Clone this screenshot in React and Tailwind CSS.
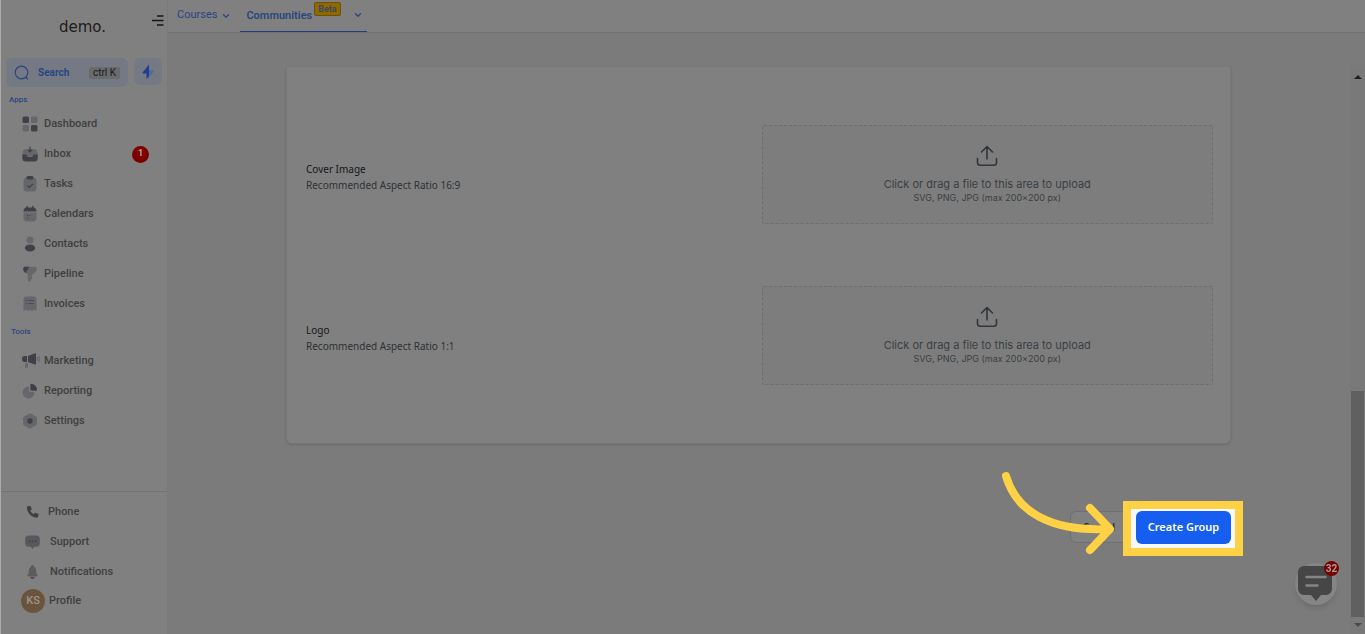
import { ChevronDown } from "lucide-react";

const apps = [
  { label: "Dashboard", icon: DashboardIcon },
  { label: "Inbox", icon: InboxIcon, count: 1 },
  { label: "Tasks", icon: TasksIcon },
  { label: "Calendars", icon: CalendarIcon },
  { label: "Contacts", icon: ContactsIcon },
  { label: "Pipeline", icon: PipelineIcon },
  { label: "Invoices", icon: InvoicesIcon },
];

const tools = [
  { label: "Marketing", icon: MarketingIcon },
  { label: "Reporting", icon: ReportingIcon },
  { label: "Settings", icon: SettingsIcon },
];

function Icon({ children }) {
  return (
    <svg viewBox="0 0 16 16" className="h-4 w-4 shrink-0" aria-hidden="true">
      {children}
    </svg>
  );
}

function DashboardIcon() {
  return (
    <Icon>
      <rect x="0.5" y="0.5" width="6.5" height="6.5" rx="1.5" fill="#3f4048" />
      <rect x="9" y="0.5" width="6.5" height="6.5" rx="1.5" fill="#66676b" />
      <rect x="0.5" y="9" width="6.5" height="6.5" rx="1.5" fill="#66676b" />
      <rect x="9" y="9" width="6.5" height="6.5" rx="1.5" fill="#3f4048" />
    </Icon>
  );
}

function InboxIcon() {
  return (
    <Icon>
      <path d="M4 3h8c2 0 3 1 3.3 3l.4 4H.3l.4-4C1 4 2 3 4 3z" fill="#66676b" />
      <path
        d="M.3 8.5h3.5c1 0 1.2 1.8 2.2 2.2h4c1-.4 1.2-2.2 2.2-2.2h3.5V12c0 2.4-1.3 3.5-3.5 3.5H3.8C1.6 15.5.3 14.4.3 12z"
        fill="#3f4048"
      />
      <path d="M8 .5v5.500M6 4l2 2 2-2" fill="none" stroke="#3f4048" strokeWidth="1.2" />
    </Icon>
  );
}

function TasksIcon() {
  return (
    <Icon>
      <rect x="1.5" y="1.5" width="13" height="14" rx="3.5" fill="#66676b" />
      <rect x="4.5" y="0" width="7" height="3.5" rx="1.5" fill="#3f4048" />
      <path d="M5.5 9.500l2 1.800 3.500-3.500" fill="none" stroke="#3f4048" strokeWidth="1.2" />
    </Icon>
  );
}

function CalendarIcon() {
  return (
    <Icon>
      <path d="M1.5 6.500h13V12c0 2.300-1.200 3.500-3.500 3.500H5c-2.300 0-3.500-1.200-3.500-3.500z" fill="#66676b" />
      <path d="M1.5 5.500C1.500 3 2.800 1.500 5 1.500h6c2.200 0 3.500 1.500 3.500 4z" fill="#3f4048" />
      <path d="M5 0v3M11 0v3" stroke="#3f4048" strokeWidth="1.5" />
      <path d="M5 9.500h1M7.500 9.500h1M5 12h1" stroke="#3f4048" strokeWidth="1" />
    </Icon>
  );
}

function ContactsIcon() {
  return (
    <Icon>
      <circle cx="8" cy="4" r="3.6" fill="#66676b" />
      <ellipse cx="8" cy="12" rx="5.2" ry="3.5" fill="#3f4048" />
    </Icon>
  );
}

function PipelineIcon() {
  return (
    <Icon>
      <path
        d="M3 .8h10c1 0 1.600.6 1.600 1.500v1.600c0 .8-.5 1.500-1 2L10.800 8c-.5.500-.7 1-.7 1.600V12c0 .6-.4 1.300-.9 1.600l-1.200 1.600c-1 .6-2.200 0-2.200-1.200V9.600c0-.5-.3-1.200-.6-1.600L2.100 5.700c-.4-.4-.7-1.100-.7-1.600V2.300C1.400 1.400 2.100.8 3 .8z"
        fill="#66676b"
      />
      <path d="M3 .8h4.500L3.400 7 2.100 5.700c-.4-.4-.7-1.100-.7-1.600V2.300C1.400 1.400 2.100.8 3 .8z" fill="#3f4048" />
    </Icon>
  );
}

function InvoicesIcon() {
  return (
    <Icon>
      <path
        d="M1.500 3c0-1.500.8-2.500 2.300-2.500h8.400c1.500 0 2.300 1 2.300 2.500v12l-2.500-1.500-2 1.800-2-1.500-2 1.500-2-1.800-2.500 1.500z"
        fill="#66676b"
      />
      <path d="M4 4.500h1.200M6.500 4.500H12M4 7.500h1.200M6.500 7.500H12" stroke="#4a4b52" strokeWidth="1.2" />
    </Icon>
  );
}

function MarketingIcon() {
  return (
    <svg viewBox="0 0 18 16" className="-mr-0.5 h-4 w-[18px] shrink-0" aria-hidden="true">
      <path d="M0 6c0-2 1-3 2.500-3H5v6H2.500C1 9 0 8 0 6zM6 3l6.500-2.500c1-.4 1.500 0 1.500 1v9c0 1-.5 1.400-1.500 1L6 9z" fill="#3f4048" />
      <path d="M3 10h3v3.500c0 2-3 2-3 0z" fill="#66676b" />
      <path d="M15.200 4v4M17.200 3v6" stroke="#66676b" strokeWidth="1.2" />
    </svg>
  );
}

function ReportingIcon() {
  return (
    <Icon>
      <path d="M7 3.500v3.300C7 8.200 7.800 9 9.200 9h3.300A6 6 0 1 1 7 3.500z" fill="#66676b" />
      <path d="M9 .8c3.500.3 5.800 2.600 6 6 0 .6-.4.900-1 .9h-4c-1 0-1.700-.6-1.700-1.600V1.500c0-.4.300-.7.700-.7z" fill="#3f4048" />
    </Icon>
  );
}

function SettingsIcon() {
  return (
    <Icon>
      <path
        d="M7 .8c.6-.4 1.400-.4 2 0l4.800 2.600c.7.400 1.200 1 1.200 1.800v5.600c0 .8-.5 1.400-1.200 1.800L9 15.200c-.6.400-1.400.4-2 0l-4.800-2.600C1.500 12.200 1 11.600 1 10.800V5.200c0-.8.500-1.400 1.200-1.800z"
        fill="#66676b"
      />
      <circle cx="8" cy="8" r="2.7" fill="#3f4048" />
    </Icon>
  );
}

function NavItem({ label, icon: ItemIcon, count }) {
  return (
    <a href="#" className="flex h-[30px] items-center gap-1.5 pr-[18px] pl-[21px]">
      <ItemIcon />
      <span className="flex-1">{label}</span>
      {count && (
        <span className="flex h-[17px] w-[17px] items-center justify-center rounded-full bg-[#7c0000] text-[9px] font-bold text-[#b9a0a0]">
          {count}
        </span>
      )}
    </a>
  );
}

function Sidebar() {
  return (
    <aside className="flex w-[168px] shrink-0 flex-col border-r border-l border-r-[#7a7a7a] border-l-[#ababab] bg-[#808080] text-[11px] font-medium text-[#3f3f40]">
      <div className="flex h-[58px] items-start justify-end">
        <div className="flex-1 pt-[18px] pl-[58px] font-['DejaVu_Sans'] text-[15px] leading-[18px] font-normal text-[#1c1c1c]">
          demo.
        </div>
        <button aria-label="Collapse menu" className="mt-[15px] mr-[3px]">
          <svg viewBox="0 0 12 12" className="h-3 w-3" stroke="#151515" strokeWidth="1.3">
            <path d="M5 1h6.500M0 5.500h11.500M5 10h6.500" />
          </svg>
        </button>
      </div>

      <div className="flex gap-1.5 px-[5px]">
        <button className="flex h-[29px] flex-1 items-center rounded-md bg-[#757984] px-2 font-bold text-[#2b4582]">
          <svg viewBox="0 0 16 16" className="mr-2 h-4 w-4" fill="none" stroke="#2b4582" strokeWidth="1.2">
            <circle cx="7.5" cy="7.5" r="6.3" />
            <path d="M12 12.500l2 1.800" />
          </svg>
          <span className="flex-1 text-left text-[10px]">Search</span>
          <kbd className="rounded-xs bg-[#6a6b6d] px-1 font-['Roboto'] text-[10px] leading-3 font-normal text-[#18191b]">
            ctrl K
          </kbd>
        </button>
        <button aria-label="Quick actions" className="flex h-[27px] w-7 items-center justify-center rounded-md bg-[#757984]">
          <svg viewBox="0 0 14 16" className="h-4 w-3.5">
            <path d="M7 1v14.500l5.500-8c.3-.6 0-1-.6-1H9z" fill="#5269a0" />
            <path d="M8 .5L1.600 8.600c-.4.600-.1 1 .5 1H5.500V15L8 12z" fill="#1f3f8c" />
          </svg>
        </button>
      </div>

      <h2 className="flex h-[22px] items-center pt-1 pl-2 text-[8px] text-[#2b4582]">Apps</h2>
      <nav>
        {apps.map((item) => (
          <NavItem key={item.label} {...item} />
        ))}
      </nav>
      <h2 className="flex h-[27px] items-center pb-0.5 pl-2.5 text-[8px] text-[#2b4582]">Tools</h2>
      <nav>
        {tools.map((item) => (
          <NavItem key={item.label} {...item} />
        ))}
      </nav>

      <nav className="mt-auto border-t border-[#747474] pt-[5px] pb-[19px]">
        <a href="#" className="flex h-[30px] items-center gap-2 pl-6">
          <svg viewBox="0 0 16 16" className="h-3.5 w-[15px]" fill="#3f3f40">
            <path d="M2.500 1.500L5 1c.5 0 .8.200 1 .7l1 2.500c.2.500 0 .8-.3 1.100L5.500 6.500c.8 1.700 2.200 3 4 4l1.200-1.300c.3-.3.700-.4 1.100-.2l2.500 1.100c.4.200.7.500.6 1l-.5 2.500c-.1.500-.5.800-1 .8C7 14.400 1.600 9 1.600 2.600c0-.5.400-1 .9-1.100z" />
          </svg>
          <span>Phone</span>
        </a>
        <a href="#" className="flex h-[30px] items-center gap-2.5 pl-6">
          <svg viewBox="0 0 16 16" className="h-4 w-[15px]">
            <path d="M4 1h8c2.500 0 3.800 1.300 3.800 3.800v4.400C15.800 11.700 14.500 13 12 13h-2l-2 2.500L6 13H4C1.500 13 .2 11.700.2 9.200V4.800C.2 2.300 1.500 1 4 1z" fill="#58595c" />
            <path d="M4 7.200h1.500M7.200 7.200h1.500M10.500 7.200H12" stroke="#333" strokeWidth="1.3" />
          </svg>
          <span>Support</span>
        </a>
        <a href="#" className="flex h-[30px] items-center gap-2.5 pl-6">
          <svg viewBox="0 0 16 16" className="h-4 w-[15px]">
            <path d="M8 2c2.600 0 4 2 4 4.200v2.500l1.200 2.300c.4 1-.1 1.800-1.200 1.800H4c-1.100 0-1.600-.8-1.200-1.800L4 8.700V6.200C4 4 5.400 2 8 2z" fill="#5b5c5f" />
            <path d="M6.500 2.200C6.500.7 9.500.7 9.500 2.200zM5.500 13.500h5c-.5 2.400-4.500 2.400-5 0z" fill="#3f4048" />
          </svg>
          <span>Notifications</span>
        </a>
        <a href="#" className="flex h-7 items-center gap-1 pl-5">
          <span className="flex h-6 w-6 items-center justify-center rounded-full bg-[#6b543c] text-[#9b948c]">
            KS
          </span>
          <span>Profile</span>
        </a>
      </nav>
    </aside>
  );
}

function TopTabs() {
  return (
    <header className="flex h-[33px] shrink-0 items-start border-b border-[#6f7176] bg-[#808080] pl-[9px] text-[11px] text-[#2b4582]">
      <a href="#" className="flex h-[31px] items-center gap-1 pr-[9px]">
        Courses
        <ChevronDown className="h-2.5 w-2.5" strokeWidth={3} />
      </a>
      <a href="#" className="flex h-8 w-[127px] items-start border-b border-[#213f80] pl-1.5 font-semibold">
        <span className="leading-[31px]">Communities</span>
        <span className="mt-0.5 ml-0.5 rounded-xs border border-[#69500b] bg-[#8f6900] px-[3px] text-[9px] leading-3 font-bold text-[#3c4860]">
          Beta
        </span>
        <ChevronDown className="mt-2.5 ml-3 h-2.5 w-2.5" strokeWidth={3} />
      </a>
    </header>
  );
}

function UploadRow({ title, hint }) {
  return (
    <div className="flex h-[99px] items-center gap-1.5">
      <div className="flex-1 pt-1 font-['Noto_Sans'] text-[10px] leading-4">
        <div className="text-[#15171c]">{title}</div>
        <div className="text-[#2d3136]">{hint}</div>
      </div>
      <button className="flex h-full flex-1 flex-col items-center rounded-xs border border-dashed border-[#6e6e6e] bg-[#7d7d7d] pt-[19px] font-['Inter'] text-[#3a3f44]">
        <svg viewBox="0 0 22 22" className="h-[22px] w-[22px]" fill="none" stroke="#30363c" strokeWidth="1.6" strokeLinecap="round" strokeLinejoin="round">
          <path d="M11 14V1.500M5.500 7L11 1.500 16.500 7M1.500 13.500v4c0 1.600 1 2.700 2.700 2.700h13.600c1.700 0 2.700-1.100 2.700-2.700v-4" />
        </svg>
        <span className="mt-[9px] text-[11px] leading-4">Click or drag a file to this area to upload</span>
        <span className="text-[9px] leading-3">SVG, PNG, JPG (max 200×200 px)</span>
      </button>
    </div>
  );
}

function FormActions() {
  return (
    <div className="mt-[67px] flex justify-end gap-2">
      <button className="h-8 w-[58px] rounded-md border border-[#6d6f73] bg-[#808080] text-[10px] font-semibold text-[#25282d]">
        Cancel
      </button>
      <div className="relative">
        <div className="absolute -top-2.5 -right-3 -bottom-3 -left-[13px] border-8 border-[#ffd245] bg-[#f8f9fa]" />
        <svg viewBox="0 0 116 84" className="absolute -top-10 right-[114px] h-[84px] w-[116px]" fill="none" stroke="#ffd245" strokeWidth="8" strokeLinecap="round" strokeLinejoin="round">
          <path d="M5 5C15 40 49 61 108 58M89 37l20 21-20 21" />
        </svg>
        <button className="relative h-[33px] w-[95px] rounded-md bg-[#155eef] text-[11px] font-semibold text-white">
          Create Group
        </button>
      </div>
    </div>
  );
}

function ScrollTrack() {
  return (
    <div className="flex w-[15px] shrink-0 flex-col items-center bg-[#797979]">
      <svg viewBox="0 0 8 4" className="mt-2 h-1 w-2 shrink-0" fill="#202020">
        <path d="M4 0l4 4H0z" />
      </svg>
      <div className="flex-[312]" />
      <div className="w-[13px] flex-[226] bg-[#606060]" />
      <svg viewBox="0 0 8 4" className="mt-1.5 mb-[7px] h-1 w-2 shrink-0" fill="#4a4a4a">
        <path d="M4 4l4-4H0z" />
      </svg>
    </div>
  );
}

function ChatButton() {
  return (
    <button aria-label="Open chat" className="fixed right-7 bottom-[29px] h-[42px] w-[42px] rounded-full bg-[#858585] shadow-md">
      <svg viewBox="0 0 42 42" className="h-full w-full">
        <path d="M10 3h20c4.500 0 7 2.500 7 7v15c0 4.500-2.500 7-7 7h-4l-5 6-5-6h-6c-4.500 0-7-2.500-7-7V10c0-4.500 2.500-7 7-7z" fill="#464646" />
        <path d="M11.500 14h19M11.500 22.500h11" stroke="#858585" strokeWidth="2.5" strokeLinecap="round" />
      </svg>
      <span className="absolute -top-0.5 -right-0.5 flex h-[15px] w-[15px] items-center justify-center rounded-full bg-[#740000] text-[10px] font-bold text-[#b09a9a]">
        32
      </span>
    </button>
  );
}

export default function App() {
  return (
    <div className="flex min-h-screen bg-[#7b7b7b] font-['Roboto',sans-serif]">
      <Sidebar />
      <div className="flex min-w-0 flex-1 flex-col">
        <TopTabs />
        <div className="mt-[34px] flex flex-1">
          <main className="flex-1 pr-[119px] pl-[118px] font-['Noto_Sans']">
            <div className="space-y-[62px] rounded-b-md border border-t-0 border-[#767779] bg-[#808080] py-[58px] pr-[17px] pl-[19px] shadow-sm">
              <UploadRow title="Cover Image" hint="Recommended Aspect Ratio 16:9" />
              <UploadRow title="Logo" hint="Recommended Aspect Ratio 1:1" />
            </div>
            <FormActions />
          </main>
          <ScrollTrack />
        </div>
      </div>
      <ChatButton />
    </div>
  );
}
